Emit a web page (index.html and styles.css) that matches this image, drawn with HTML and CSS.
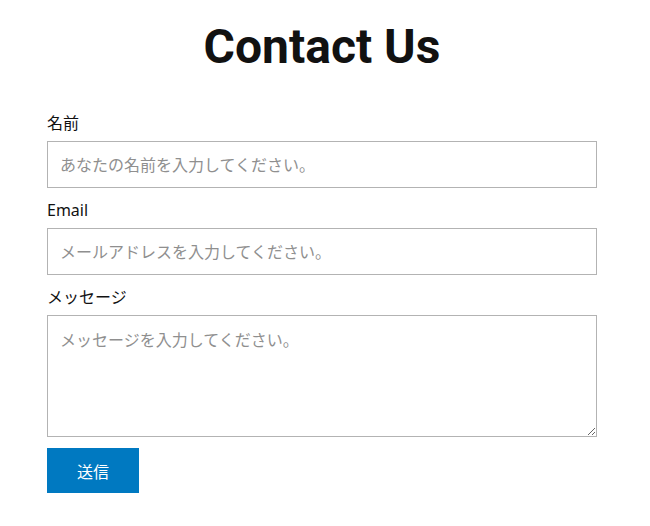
FILE: index.html
```html
<!DOCTYPE html>
<html lang="ja">
<head>
<meta charset="utf-8">
<title>Contact Us</title>
<link rel="stylesheet" href="styles.css">
</head>
<body>
<div class="container">
  <h1 class="title">Contact Us</h1>
  <form class="form">
    <label class="label" for="name">名前</label>
    <input class="field" id="name" type="text" placeholder="あなたの名前を入力してください。">
    <label class="label" for="email">Email</label>
    <input class="field" id="email" type="email" placeholder="メールアドレスを入力してください。">
    <label class="label" for="msg">メッセージ</label>
    <textarea class="field area" id="msg" placeholder="メッセージを入力してください。"></textarea>
    <button class="submit" type="button">送信</button>
  </form>
</div>
</body>
</html>
```
FILE: styles.css
```css
html, body {
  margin: 0;
  padding: 0;
  background: #fff;
}
body {
  font-family: "Noto Sans", "Noto Sans CJK JP", sans-serif;
  color: #111;
}
.container {
  width: 550px;
  margin-left: 47px;
  padding-top: 19px;
}
.title {
  font-family: Roboto, "Noto Sans", sans-serif;
  font-weight: 700;
  font-size: 48px;
  line-height: 56px;
  text-align: center;
  margin: 0 0 36px 0;
  color: #111;
}
.form {
  display: flex;
  flex-direction: column;
  align-items: flex-start;
}
.label {
  font-size: 16px;
  line-height: 24px;
  margin-bottom: 6px;
}
.field {
  box-sizing: border-box;
  width: 550px;
  height: 47px;
  border: 1px solid #b3b3b3;
  border-radius: 0;
  padding: 0 12px;
  font-family: "Noto Sans", "Noto Sans CJK JP", sans-serif;
  font-size: 16px;
  color: #333;
  margin: 0 0 10px 0;
  background: #fff;
}
.field::placeholder {
  color: #8f8f8f;
}
.area {
  height: 122px;
  padding: 11px 12px;
  resize: vertical;
  margin-bottom: 11px;
}
.submit {
  width: 92px;
  height: 45px;
  background: #0079c1;
  color: #fff;
  border: none;
  border-radius: 0;
  font-family: "Noto Sans", "Noto Sans CJK JP", sans-serif;
  font-size: 16px;
  padding: 0;
}
```
